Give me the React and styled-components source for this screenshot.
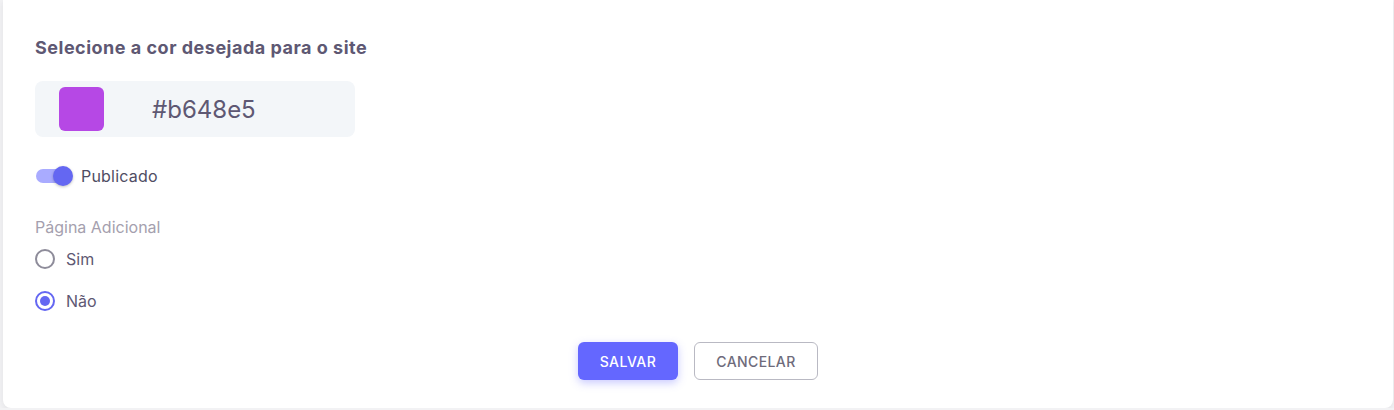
import React, { useState } from "react";
import styled, { createGlobalStyle } from "styled-components";

const GlobalStyle = createGlobalStyle`
    html, body {
        margin: 0;
        padding: 0;
        background: #f2f2f4;
        font-family: Inter, "Noto Sans", sans-serif;
    }
`;

export default function App() {
    const [published, setPublished] = useState(true);
    const [extra, setExtra] = useState("nao");
    const color = "#b648e5";

    return (
        <>
            <GlobalStyle />
            <Card>
                <Heading>Selecione a cor desejada para o site</Heading>
                <ColorField>
                    <Swatch color={color} />
                    <ColorValue>{color}</ColorValue>
                </ColorField>

                <SwitchRow onClick={() => setPublished(!published)}>
                    <Track on={published}>
                        <Thumb on={published} />
                    </Track>
                    <SwitchLabel>Publicado</SwitchLabel>
                </SwitchRow>

                <GroupLabel>Página Adicional</GroupLabel>
                <RadioList>
                    <RadioRow onClick={() => setExtra("sim")}>
                        <RadioCircle checked={extra === "sim"} />
                        <RadioText>Sim</RadioText>
                    </RadioRow>
                    <RadioRow onClick={() => setExtra("nao")}>
                        <RadioCircle checked={extra === "nao"} />
                        <RadioText>Não</RadioText>
                    </RadioRow>
                </RadioList>

                <Actions>
                    <PrimaryButton>Salvar</PrimaryButton>
                    <OutlineButton>Cancelar</OutlineButton>
                </Actions>
            </Card>
        </>
    );
}

const Card = styled.section`
    margin: 0 1px 0 3px;
    height: 408px;
    box-sizing: border-box;
    background: #fff;
    border-radius: 0 0 8px 8px;
    box-shadow: 0 2px 6px rgba(34, 41, 47, 0.08);
    padding: 36px 32px 0 32px;
`;

const Heading = styled.h2`
    margin: 0;
    font-size: 18px;
    line-height: 24px;
    font-weight: 700;
    color: #5e5873;
    letter-spacing: 0.5px;
`;

const ColorField = styled.div`
    margin-top: 21px;
    width: 320px;
    height: 56px;
    box-sizing: border-box;
    background: #f3f6f9;
    border-radius: 8px;
    display: flex;
    align-items: center;
    padding-left: 24px;
`;

const Swatch = styled.span`
    width: 45px;
    height: 44px;
    border-radius: 6px;
    background: ${(p) => p.color};
`;

const ColorValue = styled.span`
    margin-left: 48px;
    font-size: 24px;
    color: #5e5873;
`;

const SwitchRow = styled.div`
    margin-top: 29px;
    display: flex;
    align-items: center;
    cursor: pointer;
`;

const Track = styled.span`
    position: relative;
    width: 36px;
    height: 14px;
    margin-left: 1px;
    border-radius: 7px;
    background: ${(p) => (p.on ? "#a9abff" : "#c9c9d0")};
`;

const Thumb = styled.span`
    position: absolute;
    top: -3px;
    left: ${(p) => (p.on ? "17px" : "-2px")};
    width: 20px;
    height: 20px;
    border-radius: 50%;
    background: ${(p) => (p.on ? "#6467f2" : "#fafafa")};
    box-shadow: 0 1px 3px rgba(0, 0, 0, 0.25);
`;

const SwitchLabel = styled.span`
    margin-left: 9px;
    font-size: 16px;
    color: #4f4d63;
    letter-spacing: 0.2px;
`;

const GroupLabel = styled.div`
    margin-top: 31px;
    font-size: 16px;
    color: #a59fae;
`;

const RadioList = styled.div`
    margin-top: 11px;
    display: flex;
    flex-direction: column;
    gap: 20px;
`;

const RadioRow = styled.label`
    display: flex;
    align-items: center;
    height: 22px;
    cursor: pointer;
`;

const RadioCircle = styled.span`
    width: 20px;
    height: 20px;
    box-sizing: border-box;
    border-radius: 50%;
    border: 2px solid ${(p) => (p.checked ? "#6467f2" : "#8e8c9a")};
    display: flex;
    align-items: center;
    justify-content: center;
    &::after {
        content: "";
        width: 10px;
        height: 10px;
        border-radius: 50%;
        background: ${(p) => (p.checked ? "#6467f2" : "transparent")};
    }
`;

const RadioText = styled.span`
    margin-left: 11px;
    font-size: 16px;
    color: #5e5873;
`;

const Actions = styled.div`
    margin-top: 30px;
    display: flex;
    justify-content: center;
    gap: 16px;
`;

const PrimaryButton = styled.button`
    width: 100px;
    height: 38px;
    border: none;
    border-radius: 6px;
    background: #6467ff;
    color: #fff;
    font-family: Inter, sans-serif;
    font-size: 14px;
    font-weight: 500;
    letter-spacing: 0.5px;
    text-transform: uppercase;
    box-shadow: 0 3px 8px rgba(100, 103, 255, 0.35);
    cursor: pointer;
`;

const OutlineButton = styled.button`
    width: 124px;
    height: 38px;
    border: 1px solid #b9b9c3;
    border-radius: 6px;
    background: #fff;
    color: #6e6b7b;
    font-family: Inter, sans-serif;
    font-size: 14px;
    font-weight: 500;
    letter-spacing: 0.4px;
    text-transform: uppercase;
    cursor: pointer;
`;
